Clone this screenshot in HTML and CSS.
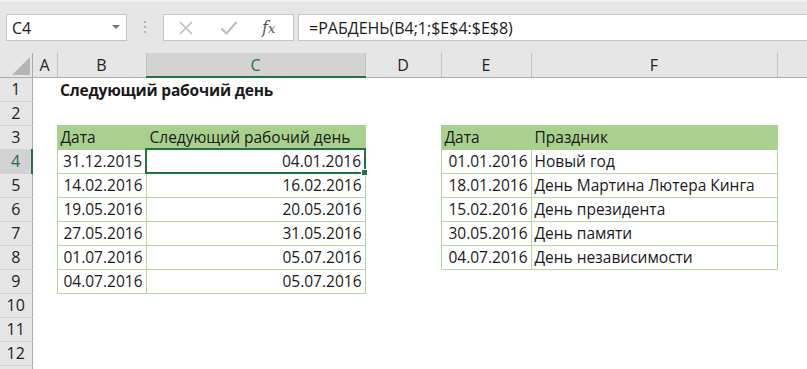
FILE: index.html
```html
<!DOCTYPE html>
<html lang="ru">
<head>
  <meta charset="UTF-8" />
  <title>РАБДЕНЬ</title>
  <link rel="stylesheet" href="styles.css">
</head>
<body>
  <div class="formula-bar">
    <div class="name-box">
      <span>C4</span>
      <svg class="caret" width="8" height="5" viewBox="0 0 8 5"><path d="M0 0h8L4 4z" fill="#777"/></svg>
    </div>
    <svg class="grip" width="4" height="14" viewBox="0 0 4 14">
      <rect x="1" y="1" width="2" height="2" fill="#b3b3b3"/>
      <rect x="1" y="6" width="2" height="2" fill="#b3b3b3"/>
      <rect x="1" y="11" width="2" height="2" fill="#b3b3b3"/>
    </svg>
    <div class="fx-buttons">
      <svg width="16" height="16" viewBox="0 0 16 16"><path d="M2 2l12 12M14 2L2 14" stroke="#bdbdbd" stroke-width="1.6" fill="none"/></svg>
      <svg width="18" height="16" viewBox="0 0 18 16"><path d="M1.5 8.5l5 5L16.5 2" stroke="#bdbdbd" stroke-width="2.2" fill="none"/></svg>
      <span class="fx">f<i>x</i></span>
    </div>
    <div class="formula">=РАБДЕНЬ(B4;1;$E$4:$E$8)</div>
  </div>

  <table class="sheet">
    <colgroup>
      <col style="width:32px"><col style="width:25px"><col style="width:89px"><col style="width:219px">
      <col style="width:76px"><col style="width:90px"><col style="width:246px"><col style="width:30px">
    </colgroup>
    <thead>
      <tr>
        <th class="corner"><svg width="18" height="18" viewBox="0 0 18 18"><path d="M18 0V18H0z" fill="#b5b5b5"/></svg></th>
        <th>A</th><th>B</th><th class="sel">C</th><th>D</th><th>E</th><th>F</th><th></th>
      </tr>
    </thead>
    <tbody>
      <tr><th>1</th><td></td><td colspan="2" class="title">Следующий рабочий день</td><td></td><td></td><td></td><td></td></tr>
      <tr><th>2</th><td></td><td></td><td></td><td></td><td></td><td></td><td></td></tr>
      <tr><th>3</th><td></td><td class="hd">Дата</td><td class="hd">Следующий рабочий день</td><td></td><td class="hd">Дата</td><td class="hd">Праздник</td><td></td></tr>
      <tr><th class="sel">4</th><td></td><td class="g num">31.12.2015</td><td class="g num active">04.01.2016<span class="handle"></span></td><td></td><td class="g num">01.01.2016</td><td class="g">Новый год</td><td></td></tr>
      <tr><th>5</th><td></td><td class="g num">14.02.2016</td><td class="g num">16.02.2016</td><td></td><td class="g num">18.01.2016</td><td class="g">День Мартина Лютера Кинга</td><td></td></tr>
      <tr><th>6</th><td></td><td class="g num">19.05.2016</td><td class="g num">20.05.2016</td><td></td><td class="g num">15.02.2016</td><td class="g">День президента</td><td></td></tr>
      <tr><th>7</th><td></td><td class="g num">27.05.2016</td><td class="g num">31.05.2016</td><td></td><td class="g num">30.05.2016</td><td class="g">День памяти</td><td></td></tr>
      <tr><th>8</th><td></td><td class="g num">01.07.2016</td><td class="g num">05.07.2016</td><td></td><td class="g num">04.07.2016</td><td class="g">День независимости</td><td></td></tr>
      <tr><th>9</th><td></td><td class="g num">04.07.2016</td><td class="g num">05.07.2016</td><td></td><td></td><td></td><td></td></tr>
      <tr><th>10</th><td></td><td></td><td></td><td></td><td></td><td></td><td></td></tr>
      <tr><th>11</th><td></td><td></td><td></td><td></td><td></td><td></td><td></td></tr>
      <tr><th>12</th><td></td><td></td><td></td><td></td><td></td><td></td><td></td></tr>
      <tr><th></th><td></td><td></td><td></td><td></td><td></td><td></td><td></td></tr>
    </tbody>
  </table>
</body>
</html>
```

FILE: styles.css
```css
body {
  margin: 0;
  background: #fff;
  font-family: "Open Sans", "Noto Sans", sans-serif;
  color: #1a1a1a;
  overflow: hidden;
}
.formula-bar {
  height: 53px;
  box-sizing: border-box;
  background: #e6e6e6;
  border-top: 2px solid #f0f0f0;
  padding: 12px 0 0 6px;
  display: flex;
  align-items: flex-start;
}
.name-box, .fx-buttons, .formula {
  height: 27px;
  box-sizing: border-box;
  background: #fff;
  border: 1px solid #c6c6c6;
  display: flex;
  align-items: center;
}
.name-box {
  width: 121px;
  padding: 0 6px 0 5px;
  justify-content: space-between;
  font-size: 16px;
}
.grip {
  margin: 6px 16px 0 16px;
}
.fx-buttons {
  width: 131px;
  padding: 0 0 0 14px;
}
.fx-buttons svg:first-child {
  margin-right: 26px;
}
.fx-buttons svg:nth-child(2) {
  margin-right: 24px;
}
.fx {
  font-family: "DejaVu Serif", "Liberation Serif", serif;
  font-style: italic;
  font-size: 16px;
  color: #555;
}
.fx i {
  font-size: 13px;
}
.formula {
  flex: 1;
  margin-left: 4px;
  padding-left: 10px;
  font-size: 16px;
  border-right: none;
}
.sheet {
  border-collapse: collapse;
  table-layout: fixed;
  width: 807px;
  font-size: 15.5px;
}
.sheet tr {
  height: 24px;
}
.sheet th, .sheet td {
  padding: 0 3px;
  height: 24px;
  box-sizing: border-box;
  white-space: nowrap;
}
.sheet thead th {
  background: #e6e6e6;
  font-weight: normal;
  font-size: 16px;
  color: #222;
  border-right: 1px solid #c4c4c4;
  border-bottom: 1px solid #ababab;
  text-align: center;
}
.sheet thead th.corner {
  vertical-align: bottom;
  padding: 0 2px 2px 0;
  border-right: 1px solid #ababab;
}
.corner svg {
  display: block;
  margin-left: auto;
}
.sheet thead th.sel {
  background: #d3d3d3;
  color: #217346;
  border-bottom: 2px solid #217346;
}
.sheet tbody th {
  background: #e6e6e6;
  font-weight: normal;
  font-size: 16px;
  color: #222;
  border-right: 1px solid #ababab;
  border-bottom: 1px solid #d4d4d4;
  text-align: center;
}
.sheet tbody th.sel {
  background: #d3d3d3;
  color: #217346;
  border-right: 2px solid #217346;
}
.title {
  font-weight: bold;
  letter-spacing: -0.2px;
}
.hd {
  background: #a9d08e;
  border: 1px solid #a9d08e;
}
.g {
  border: 1px solid #b4d89c;
}
.num {
  text-align: right;
}
.active {
  border: 2px solid #217346;
  position: relative;
}
.handle {
  position: absolute;
  right: -4px;
  bottom: -4px;
  width: 5px;
  height: 5px;
  background: #217346;
  border: 1px solid #fff;
}
```
